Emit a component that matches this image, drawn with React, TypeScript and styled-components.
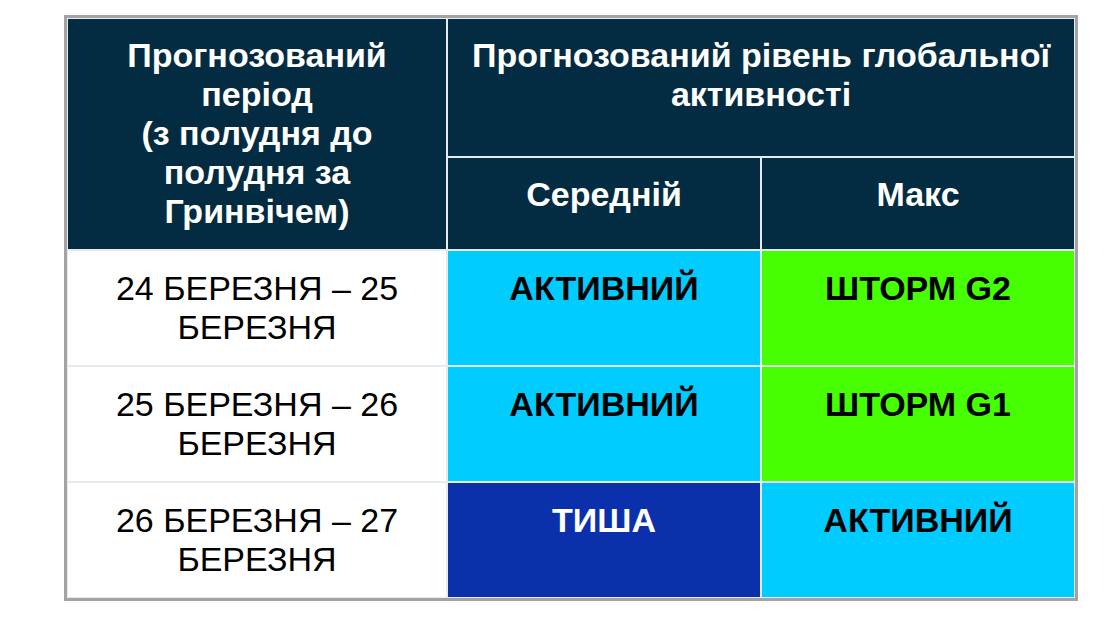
import React from 'react';
import styled, { createGlobalStyle } from 'styled-components';

type Level = 'active' | 'storm' | 'quiet';

interface Row {
	period: string;
	average: { label: string; level: Level };
	max: { label: string; level: Level };
}

const rows: Row[] = [
	{
		period: '24 БЕРЕЗНЯ – 25 БЕРЕЗНЯ',
		average: { label: 'АКТИВНИЙ', level: 'active' },
		max: { label: 'ШТОРМ G2', level: 'storm' },
	},
	{
		period: '25 БЕРЕЗНЯ – 26 БЕРЕЗНЯ',
		average: { label: 'АКТИВНИЙ', level: 'active' },
		max: { label: 'ШТОРМ G1', level: 'storm' },
	},
	{
		period: '26 БЕРЕЗНЯ – 27 БЕРЕЗНЯ',
		average: { label: 'ТИША', level: 'quiet' },
		max: { label: 'АКТИВНИЙ', level: 'active' },
	},
];

const levelColors: Record<Level, { bg: string; fg: string }> = {
	active: { bg: '#00ccff', fg: '#000000' },
	storm: { bg: '#46ff00', fg: '#000000' },
	quiet: { bg: '#0b30ab', fg: '#ffffff' },
};

const App = (): React.FunctionComponentElement<JSX.Element> => {
	return (
		<>
			<GlobalStyle />
			<Page>
				<Table>
					<HeaderCell $rowSpan={2}>
						Прогнозований період
						<br />
						(з полудня до полудня за Гринвічем)
					</HeaderCell>
					<HeaderCell $colSpan={2}>Прогнозований рівень глобальної активності</HeaderCell>
					<HeaderCell>Середній</HeaderCell>
					<HeaderCell>Макс</HeaderCell>
					{rows.map((row) => (
						<React.Fragment key={row.period}>
							<PeriodCell>{row.period}</PeriodCell>
							<LevelCell $level={row.average.level}>{row.average.label}</LevelCell>
							<LevelCell $level={row.max.level}>{row.max.label}</LevelCell>
						</React.Fragment>
					))}
				</Table>
			</Page>
		</>
	);
};

const GlobalStyle = createGlobalStyle`
	html, body {
		margin: 0;
		padding: 0;
		background: #ffffff;
	}

	body {
		font-family: 'Liberation Sans', Arial, sans-serif;
	}
`;

const Page = styled.div`
	width: 1119px;
	height: 619px;
	padding: 15px 0 0 64px;
	box-sizing: border-box;
`;

const Table = styled.div`
	display: grid;
	grid-template-columns: 378px 312px 312px;
	grid-template-rows: 137px 91px 114px 114px 114px;
	gap: 2px;
	padding: 1px;
	width: max-content;
	background: #e4ecef;
	border: 3px solid #a3a3a6;
`;

const Cell = styled.div`
	box-sizing: border-box;
	padding: 17px 8px 0;
	font-size: 34px;
	line-height: 39px;
	text-align: center;
`;

const HeaderCell = styled(Cell)<{ $rowSpan?: number; $colSpan?: number }>`
	grid-row: span ${(p) => p.$rowSpan ?? 1};
	grid-column: span ${(p) => p.$colSpan ?? 1};
	background: #032b41;
	color: #ffffff;
	font-weight: bold;
`;

const PeriodCell = styled(Cell)`
	padding-top: 18px;
	background: #ffffff;
	color: #000000;
`;

const LevelCell = styled(Cell)<{ $level: Level }>`
	padding-top: 18px;
	background: ${(p) => levelColors[p.$level].bg};
	color: ${(p) => levelColors[p.$level].fg};
	font-weight: bold;
`;

export default App;
